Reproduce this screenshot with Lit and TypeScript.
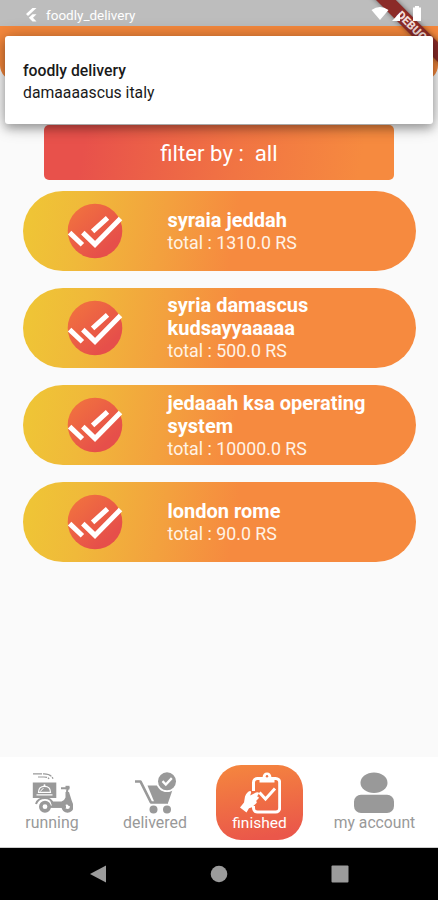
import { LitElement, html, css, svg } from "lit";
import { customElement, property } from "lit/decorators.js";

interface Order {
  place: string;
  total: string;
}

const ORDERS: Order[] = [
  { place: "syraia jeddah", total: "1310.0" },
  { place: "syria damascus kudsayyaaaaa", total: "500.0" },
  { place: "jedaaah ksa operating system", total: "10000.0" },
  { place: "london rome", total: "90.0" },
];

@customElement("order-card")
class OrderCard extends LitElement {
  @property() place = "";
  @property() total = "";

  static styles = css`
    :host {
      display: flex;
      align-items: center;
      box-sizing: border-box;
      height: 80px;
      padding-left: 44.5px;
      border-radius: 40px;
      background: linear-gradient(100deg, #efc436 3%, #f0b93a 16%, #f3a13e 36%, #f68a3f 54%, #f68a3f 100%);
      color: #fff;
    }
    .badge {
      flex: none;
      width: 56px;
      height: 56px;
      margin-right: 44.5px;
    }
    .text {
      width: 212px;
      padding-top: 1px;
    }
    .place {
      font-size: 20px;
      line-height: 23px;
      font-weight: 700;
    }
    .total {
      font-size: 17.8px;
      line-height: 22px;
      color: #fff3e6;
    }
  `;

  render() {
    return html`
      <svg class="badge" viewBox="0 0 56 56">
        <defs>
          <linearGradient id="g" x1="0.1" y1="0.1" x2="0.75" y2="0.8">
            <stop offset="0" stop-color="#f1713f" />
            <stop offset="1" stop-color="#e64f4a" />
          </linearGradient>
        </defs>
        <circle cx="28" cy="28" r="27.3" fill="url(#g)" />
        <path d="M2.6 29.6 15.4 41.800M15.800 29.600 28 41.400 53.500 15.600M25.600 28.400 40.500 14.800" fill="none" stroke="#fff" stroke-width="5" />
      </svg>
      <div class="text">
        <div class="place">${this.place}</div>
        <div class="total">total : ${this.total} RS</div>
      </div>
    `;
  }
}

const scooter = svg`
  <g fill="none" stroke="#999">
    <path d="M2 1.800h11q7 0 9 5M7 5h6q4 0 5 2" stroke-width="1.200" stroke-dasharray="9 1"/>
    <path d="M30 16.200h7q-1.500 2.500-.5 5l1 7" stroke-width="2"/>
    <path d="M17 34.700h18" stroke-width="2.400"/>
    <circle cx="14" cy="34.700" r="4.200" stroke-width="3.600"/>
    <circle cx="36.500" cy="34.700" r="4.200" stroke-width="3.600"/>
    <path d="M5 32q2-6 9-6 6 0 8 6" stroke-width="2"/>
  </g>
  <path d="M1.800 10.500h23.500v15.500H1.800z" fill="#999"/>
  <path d="M5.500 22.800h16M7.500 20.300q0-6 6-6t6 6z" fill="none" stroke="#fff" stroke-width="1.200"/>
  <circle cx="13.500" cy="13.300" r="1" fill="#fff"/>
  <path d="M9.500 19.500q1-2.500 3-3" stroke="#fff" stroke-width="1" fill="none"/>
  <path d="M34.500 20h3.500l2.500 8q1.500 2 .8 6h-3.500q-3-4-5-1l-2 2.500H21.500l-2-6h11q3-1 4-4z" fill="#999"/>
  <path d="M34.500 13.800h4v3.600h-4z" fill="#999"/>`;

const cart = svg`
  <path d="M1 9.500h5.500L17 30.500h17" fill="none" stroke="#999" stroke-width="2.700" stroke-linejoin="round"/>
  <path d="M13.500 13.500h26.500l-5.800 17H20.500z" fill="#999"/>
  <circle cx="19.500" cy="37.600" r="4" fill="#999"/>
  <circle cx="33" cy="37.600" r="4" fill="#999"/>
  <circle cx="33" cy="9.300" r="10.800" fill="#fff"/>
  <circle cx="33" cy="9.300" r="9" fill="#999"/>
  <path d="M28.500 9.100l3.300 3.400 6-6.400" fill="none" stroke="#fff" stroke-width="2.300"/>`;

const clipboard = svg`
  <rect x="14.500" y="6.500" width="26.200" height="33.500" rx="4" fill="none" stroke="#fff" stroke-width="3"/>
  <path d="M20.500 10.500V7.500q0-2 2-2h1q.5-5 4.500-5t4.500 5h1q2 0 2 2v3z" fill="#fff"/>
  <circle cx="28" cy="4.300" r="1.200" fill="#ef7445"/>
  <path d="M13 19V34" stroke="#ef6f45" stroke-width="7"/>
  <path d="M20.500 20.500l6 6.500 9.500-10.500" fill="none" stroke="#fff" stroke-width="3"/>
  <path d="M1 35.500 5 30.500 6 24.500q2-5 5-5.500 1.500 0 1 2l-.8 2.500L17 20.500q3-1 3 1l-2 3q2.500 0 1.500 2l-2.500 2.500q1.500 1 0 2.500l-4 3.800-3 1-2.500 4.200z" fill="#fff"/>`;

const person = svg`
  <ellipse cx="20" cy="10.800" rx="13.500" ry="10.300" fill="#999"/>
  <rect x="0" y="22.800" width="40" height="18.300" rx="7" fill="#999"/>`;

@customElement("app-root")
class AppRoot extends LitElement {
  static styles = css`
    :host {
      display: flex;
      flex-direction: column;
      position: relative;
      width: 438px;
      height: 900px;
      overflow: hidden;
      background: #fafafa;
      font-family: Roboto, "Noto Sans", sans-serif;
    }
    .status {
      display: flex;
      align-items: center;
      flex: none;
      box-sizing: border-box;
      height: 26px;
      padding: 3px 16px 0 25px;
      background: #bdbdbd;
      color: #fff;
      font-size: 13.5px;
    }
    .flutter {
      width: 12px;
      height: 14px;
      margin-right: 9px;
    }
    .signals {
      position: absolute;
      z-index: 2;
      left: 370px;
      top: 4px;
      width: 54px;
      height: 19px;
    }
    .header {
      flex: none;
      height: 55px;
      background: #f6883c;
      border-radius: 0 0 16px 16px;
    }
    .notice {
      position: absolute;
      z-index: 3;
      left: 5px;
      top: 36px;
      box-sizing: border-box;
      width: 428px;
      height: 88px;
      padding: 24px 18px 0;
      border-radius: 3px;
      background: #fff;
      box-shadow: 0 5px 9px rgba(0, 0, 0, 0.22), 0 1px 18px rgba(0, 0, 0, 0.32);
      color: #1a1a1a;
      font-size: 15.75px;
      line-height: 21.5px;
    }
    .notice-title {
      font-weight: 500;
    }
    .debug {
      position: absolute;
      z-index: 1;
      left: 352px;
      top: 19px;
      width: 120px;
      height: 13.5px;
      transform: rotate(45deg);
      background: #8b2b28;
      box-shadow: 0 0 5px rgba(0, 0, 0, 0.45);
      color: #f3dcd8;
      font-size: 11.5px;
      font-weight: 900;
      line-height: 14px;
      text-align: center;
    }
    .filter {
      flex: none;
      width: 350px;
      height: 54.500px;
      margin: 44px 0 0 44px;
      border-radius: 5px;
      background: linear-gradient(100deg, #e8514b 12%, #f17443 55%, #f68a3f 90%);
      color: #fff;
      font-size: 22.2px;
      line-height: 56px;
      text-align: center;
      white-space: pre;
    }
    .orders {
      display: flex;
      flex: 1;
      flex-direction: column;
      gap: 17.3px;
      padding: 11px 22px 0 22.500px;
    }
    .tabs {
      display: grid;
      grid-template-columns: 104px 102px 107px 125px;
      flex: none;
      box-sizing: border-box;
      height: 91px;
      padding-top: 8px;
      background: #fff;
      border-bottom: 1px solid #ccc;
    }
    .tab {
      display: flex;
      flex-direction: column;
      align-items: center;
      justify-self: center;
      box-sizing: border-box;
      height: 75px;
      padding-top: 7px;
      color: #999;
      font-size: 15.9px;
      line-height: 18px;
      white-space: nowrap;
    }
    .account {
      font-size: 15.7px;
      padding-right: 2px;
    }
    .tab svg {
      display: block;
      width: 42px;
      height: 42px;
      flex: none;
    }
    .active {
      width: 87px;
      border-radius: 25px;
      background: linear-gradient(170deg, #f5873e, #ea574a 90%);
      color: #fff;
      font-size: 15.500px;
    }
    .system {
      display: flex;
      align-items: center;
      justify-content: space-between;
      flex: none;
      box-sizing: border-box;
      height: 52px;
      padding: 0 89px;
      background: #000;
    }
    .system svg {
      width: 18px;
      height: 18px;
    }
  `;

  render() {
    return html`
      <div class="status">
        <svg class="flutter" viewBox="0 0 12 14">
          <path d="M7.500 0H11.500L3 8 1 6zM7.500 6.300H11.500L8 9.800 11.500 13.500H7.500L3.800 9.800z" fill="#fff" />
        </svg>
        <span>foodly_delivery</span>
      </div>
      <svg class="signals" viewBox="0 0 54 19">
        <path d="M1.500 6Q10 0 18.500 6L10 16zM30 8.500V17H22zM43 3.500H45V2H49V3.500H51V17H43z" fill="#fff" />
      </svg>
      <div class="debug">DEBUG</div>
      <div class="header"></div>
      <div class="notice">
        <div class="notice-title">foodly delivery</div>
        <div>damaaaascus italy</div>
      </div>
      <div class="filter">filter by :  all</div>
      <div class="orders">
        ${ORDERS.map((o) => html`<order-card .place=${o.place} .total=${o.total}></order-card>`)}
      </div>
      <div class="tabs">
        <div class="tab"><svg viewBox="0 0 42 42">${scooter}</svg>running</div>
        <div class="tab"><svg viewBox="0 0 42 42">${cart}</svg>delivered</div>
        <div class="tab active"><svg viewBox="0 0 42 42">${clipboard}</svg>finished</div>
        <div class="tab account"><svg viewBox="-1 0 42 42">${person}</svg>my account</div>
      </div>
      <div class="system">
        <svg viewBox="0 0 18 18"><path d="M1 9 17 .5V17.500z" fill="#9b9b9b" /></svg>
        <svg viewBox="0 0 18 18"><circle cx="9" cy="9" r="8.300" fill="#9b9b9b" /></svg>
        <svg viewBox="0 0 18 18"><rect x=".5" y=".5" width="17" height="17" rx="1" fill="#9b9b9b" /></svg>
      </div>
    `;
  }
}
